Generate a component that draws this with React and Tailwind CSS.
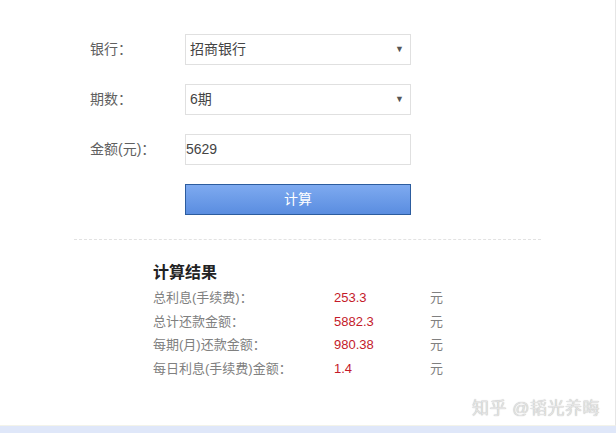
export default function App() {
  const font = { fontFamily: '"Liberation Sans", "Noto Sans CJK SC", sans-serif' };
  const fields = [
    { label: '银行：', value: '招商银行', select: true },
    { label: '期数：', value: '6期', select: true },
    { label: '金额(元)：', value: '5629', select: false },
  ];
  const results = [
    ['总利息(手续费)：', '253.3'],
    ['总计还款金额：', '5882.3'],
    ['每期(月)还款金额：', '980.38'],
    ['每日利息(手续费)金额：', '1.4'],
  ];
  return (
    <div className="w-[616px] h-[433px] bg-white flex flex-col overflow-hidden" style={font}>
      <div className="relative h-[426px] border-r border-[#e6e6e6] border-b border-b-[#f3f3ea]">
        <div className="pt-[34px] pl-[90px] flex flex-col gap-[19px]">
          {fields.map((f) => (
            <div key={f.label} className="flex items-center h-[31px]">
              <span className="w-[95px] text-[14px] text-[#606060]">{f.label}</span>
              <div className={`w-[226px] h-[31px] border border-[#e0e0e0] flex items-center justify-between text-[14px] text-[#444] ${f.select ? 'pl-[4px] pr-[6px]' : 'pl-0'}`}>
                <span>{f.value}</span>
                {f.select && <span className="text-[9px] text-[#555]">▼</span>}
              </div>
            </div>
          ))}
          <div className="flex">
            <div className="ml-[95px] w-[226px] h-[31px] border border-[#2c5c9e] bg-gradient-to-b from-[#7eaaf0] to-[#5a8de0] flex items-center justify-center text-white text-[14px]">
              计算
            </div>
          </div>
        </div>
        <div className="ml-[74px] w-[467px] mt-[24px] border-t border-dashed border-[#e2e2e2]" />
        <div className="pl-[153px] pt-[23px]">
          <div className="text-[16px] font-bold text-[#222] leading-[20px]">计算结果</div>
          <div className="mt-[3px]">
            {results.map(([k, v]) => (
              <div key={k} className="flex items-center h-[23.7px] text-[13px]">
                <span className="w-[181px] text-[#808080]">{k}</span>
                <span className="w-[96px] text-[#c41a2a]">{v}</span>
                <span className="text-[#808080]">元</span>
              </div>
            ))}
          </div>
        </div>
        <div className="absolute left-[472px] top-[396px] text-[17px] text-[#e4e4e4] tracking-[0.5px]" style={{ textShadow: '0 0 1px #a8a8a8' }}>
          知乎 @韬光养晦
        </div>
      </div>
      <div className="flex-1 bg-[#dfe7f9]" />
    </div>
  );
}
